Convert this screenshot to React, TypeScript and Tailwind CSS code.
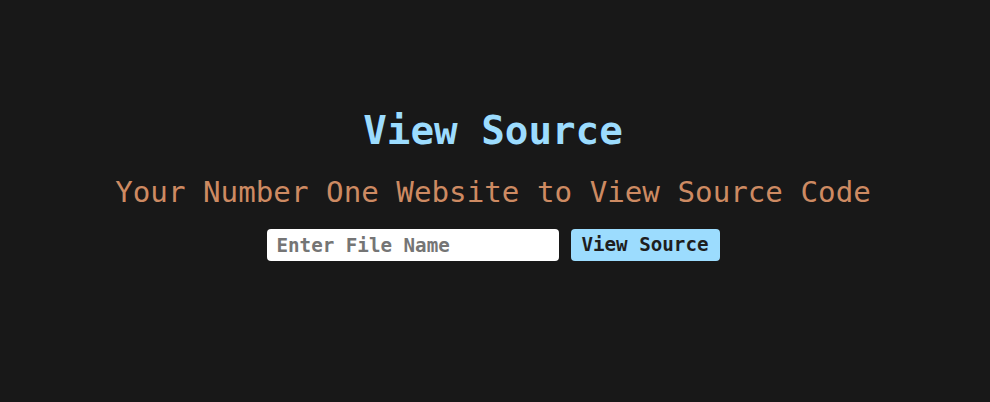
import React from "react";

export default function App() {
  return (
    <div
      className="w-full h-[402px] bg-[#181818] flex flex-col items-center pt-[108px] pr-[4px]"
      style={{ fontFamily: '"DejaVu Sans Mono", "Liberation Mono", monospace' }}
    >
      <h1 className="text-[39.2px] leading-[46px] font-bold text-[#9cdcfe]">View Source</h1>
      <h2 className="mt-[21px] text-[29.2px] leading-[34px] text-[#cd8a62]">
        Your Number One Website to View Source Code
      </h2>
      <div className="mt-[20px] flex items-center gap-[12px]">
        <input
          type="text"
          placeholder="Enter File Name"
          className="w-[292px] h-[32px] rounded-[4px] bg-white px-[10px] text-[19.2px] font-bold text-[#1e1e1e] placeholder:text-[#757575] outline-none"
          style={{ fontFamily: '"DejaVu Sans Mono", "Liberation Mono", monospace' }}
        />
        <button
          className="w-[149px] h-[32px] rounded-[4px] bg-[#9cdcfe] text-[19.2px] font-bold text-[#1e1e1e]"
          style={{ fontFamily: '"DejaVu Sans Mono", "Liberation Mono", monospace' }}
        >
          View Source
        </button>
      </div>
    </div>
  );
}
